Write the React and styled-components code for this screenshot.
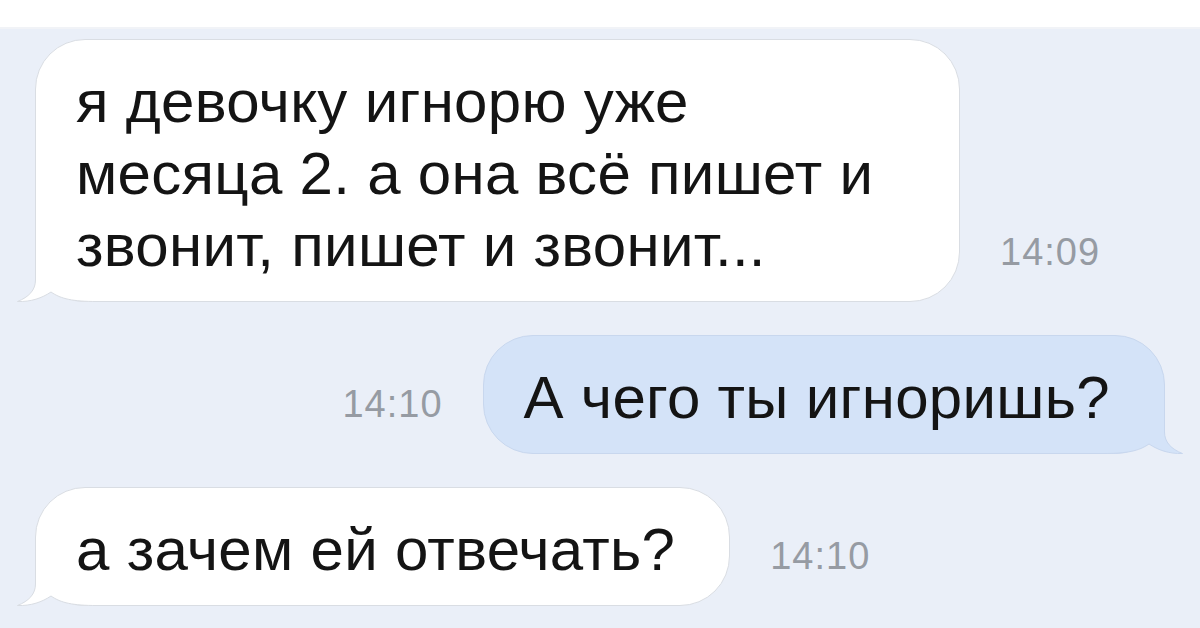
import React from 'react';
import styled, { createGlobalStyle } from 'styled-components';

const GlobalStyle = createGlobalStyle`
	html, body {
		margin: 0;
		padding: 0;
		background: #eaeff8;
	}
	body {
		font-family: 'Liberation Sans', Arial, sans-serif;
	}
`;

const Screen = styled.div`
	width: 1200px;
	height: 628px;
	overflow: hidden;
	background: #eaeff8;
	display: flex;
	flex-direction: column;
`;

const TopStrip = styled.div`
	height: 27px;
	background: #ffffff;
	border-bottom: 2px solid #f1f3f7;
	flex-shrink: 0;
`;

const Thread = styled.div`
	display: flex;
	flex-direction: column;
	gap: 33px;
	padding: 10px 35px 0 35px;
`;

const Row = styled.div`
	display: flex;
	align-items: flex-end;
	gap: 40px;
	justify-content: ${(p) => (p.$out ? 'flex-end' : 'flex-start')};
`;

const Bubble = styled.div`
	position: relative;
	box-sizing: border-box;
	width: ${(p) => (p.$width ? `${p.$width}px` : 'auto')};
	padding: 26px 54px 19px 40px;
	border-radius: 50px;
	background: ${(p) => (p.$out ? '#d4e3f8' : '#ffffff')};
	border: 1px solid ${(p) => (p.$out ? '#c8d7ee' : '#d9dde3')};
	color: #141414;
	font-size: 60px;
	line-height: 72px;
	white-space: nowrap;
`;

const Line = styled.div`
	position: relative;
	letter-spacing: 0.3px;
`;

const Time = styled.div`
	font-size: 38px;
	line-height: 38px;
	color: #969ba3;
	margin-bottom: 31px;
	letter-spacing: 1px;
`;

const TailSvg = styled.svg`
	position: absolute;
	bottom: -1px;
	width: 80px;
	height: 56px;
	${(p) => (p.$out ? 'right: -19px; transform: scaleX(-1);' : 'left: -19px;')}
`;

const Tail = ({ out }) => {
	const fill = out ? '#d4e3f8' : '#ffffff';
	const stroke = out ? '#c8d7ee' : '#d9dde3';
	const d = 'M18.5 0 L18.5 34 C18.5 44 12 51 0.5 55.5 C14 56 25 52 34 46 C44 53 56 55.5 80 55.5';
	return (
		<TailSvg $out={out} viewBox='0 0 80 56'>
			<path d={`${d} L80 0 Z`} fill={fill} />
			<path d={d} fill='none' stroke={stroke} strokeWidth='1' />
		</TailSvg>
	);
};

const messages = [
	{
		out: false,
		time: '14:09',
		width: 925,
		lines: ['я девочку игнорю уже', 'месяца 2. а она всё пишет и', 'звонит, пишет и звонит...'],
	},
	{ out: true, time: '14:10', lines: ['А чего ты игноришь?'] },
	{ out: false, time: '14:10', lines: ['а зачем ей отвечать?'] },
];

const Message = ({ out, time, width, lines }) => (
	<Row $out={out}>
		{out && <Time>{time}</Time>}
		<Bubble $out={out} $width={width}>
			<Tail out={out} />
			{lines.map((line, i) => (
				<Line key={i}>{line}</Line>
			))}
		</Bubble>
		{!out && <Time>{time}</Time>}
	</Row>
);

export default function App() {
	return (
		<>
			<GlobalStyle />
			<Screen>
				<TopStrip />
				<Thread>
					{messages.map((m, i) => (
						<Message key={i} {...m} />
					))}
				</Thread>
			</Screen>
		</>
	);
}
